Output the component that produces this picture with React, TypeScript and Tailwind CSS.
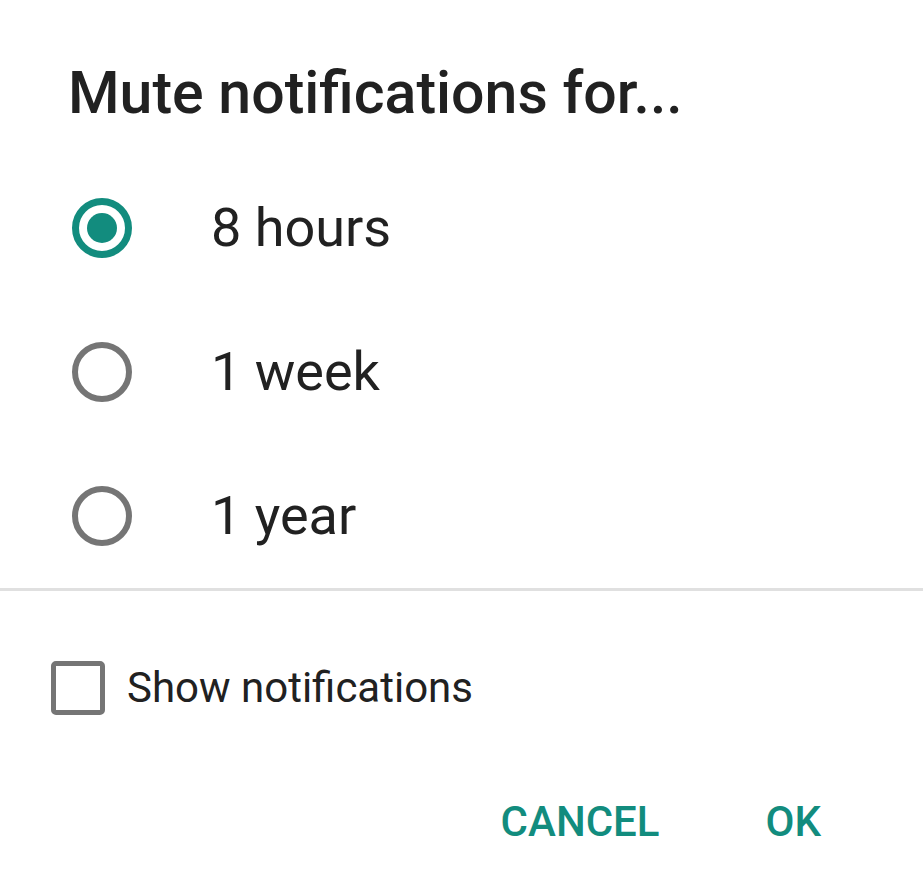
import { useState } from "react";

const options = ["8 hours", "1 week", "1 year"];

export default function App() {
  const [selected, setSelected] = useState(0);
  const [showNotifications, setShowNotifications] = useState(false);

  return (
    <div className="w-[923px] h-[891px] bg-white overflow-hidden font-['Roboto',sans-serif]">
      <h1 className="pl-[68px] pt-[63px] text-[59px] leading-none font-medium text-[#212121]">
        Mute notifications for...
      </h1>

      <ul className="mt-[34px] flex flex-col">
        {options.map((label, i) => (
          <li
            key={label}
            onClick={() => setSelected(i)}
            className="h-[144px] flex items-center pl-[72px] gap-[79px] cursor-pointer"
          >
            {selected === i ? (
              <span className="w-[60px] h-[60px] rounded-full border-[7px] border-[#128c7e] flex items-center justify-center">
                <span className="w-[30px] h-[30px] rounded-full bg-[#128c7e]" />
              </span>
            ) : (
              <span className="w-[60px] h-[60px] rounded-full border-[6px] border-[#757575]" />
            )}
            <span className="text-[54px] leading-none text-[#212121]">{label}</span>
          </li>
        ))}
      </ul>

      <div className="h-[3px] bg-[#e0e0e0]" />

      <label
        className="mt-[70px] pl-[51px] flex items-center gap-[22px] cursor-pointer"
        onClick={() => setShowNotifications(!showNotifications)}
      >
        <span className="w-[54px] h-[54px] rounded-[5px] border-[5px] border-[#757575]" />
        <span className="text-[42px] leading-none text-[#212121]">Show notifications</span>
      </label>

      <div className="mt-[86px] flex justify-end items-center gap-[106px] pr-[102px]">
        <button className="text-[42px] leading-none font-medium text-[#128c7e]">CANCEL</button>
        <button className="text-[42px] leading-none font-medium text-[#128c7e]">OK</button>
      </div>
    </div>
  );
}
